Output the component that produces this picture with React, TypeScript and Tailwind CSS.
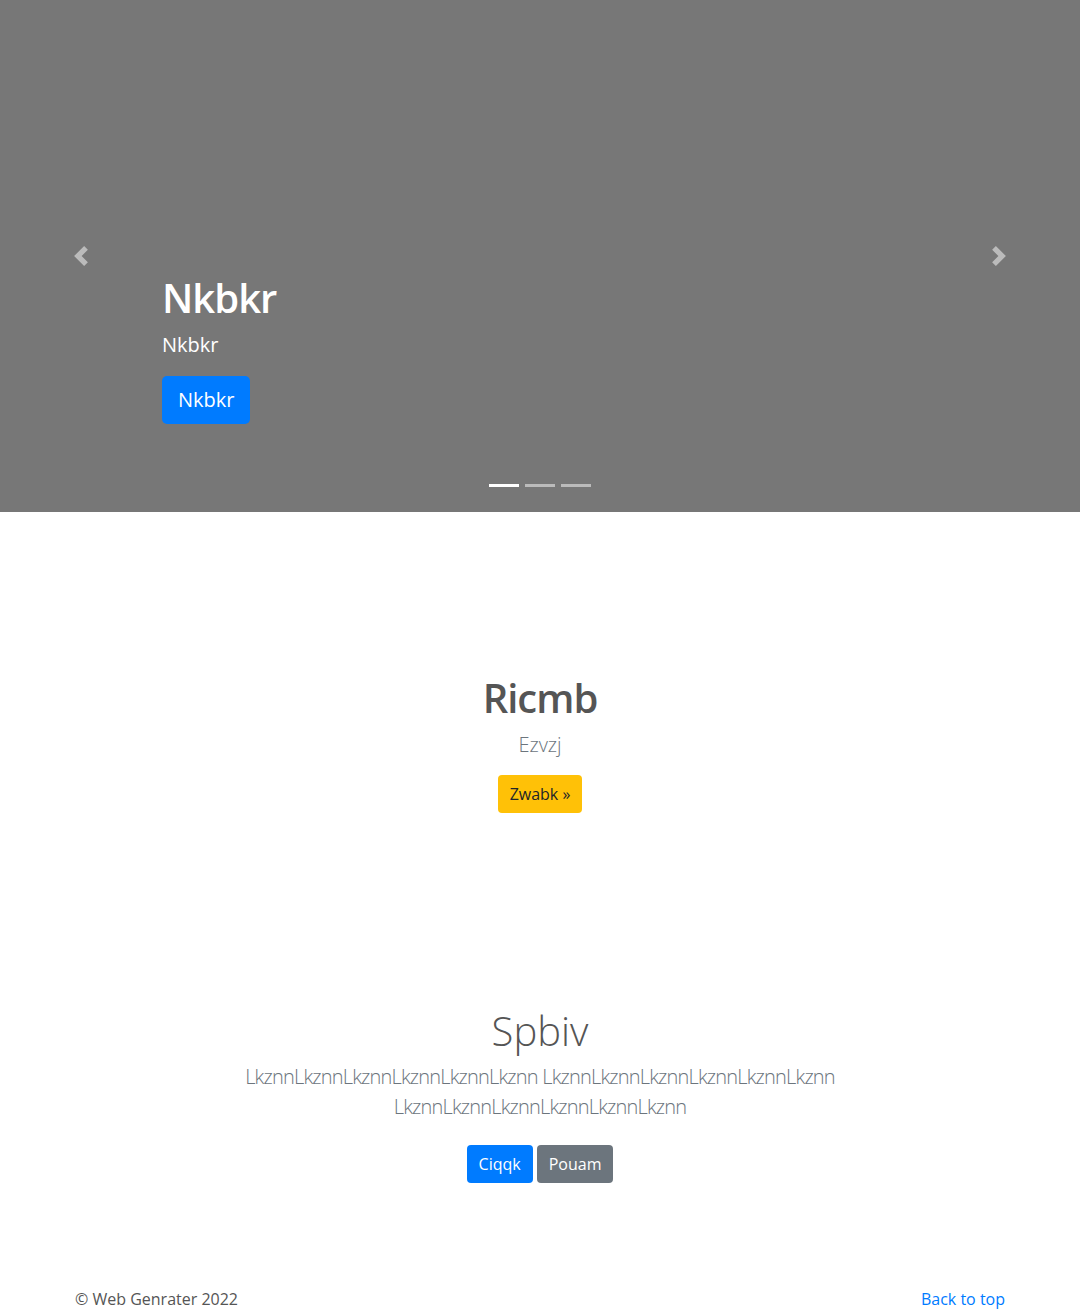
const font = { fontFamily: '"Open Sans", "Noto Sans", sans-serif' };

function ChevronLeft() {
  return (
    <svg viewBox="0 0 8 8" className="h-5 w-5 fill-white opacity-50">
      <path d="M5.25 0l-4 4 4 4 1.5-1.5L4.25 4l2.5-2.5L5.25 0z" />
    </svg>
  );
}

function ChevronRight() {
  return (
    <svg viewBox="0 0 8 8" className="h-5 w-5 fill-white opacity-50">
      <path d="M2.75 0l-1.5 1.5L3.75 4l-2.5 2.5L2.75 8l4-4-4-4z" />
    </svg>
  );
}

export default function App() {
  return (
    <div className="min-h-[1310px] bg-white text-[#212529]" style={font}>
      <section className="relative flex h-[512px] bg-[#777777]">
        <div className="flex w-[162px] items-center justify-center">
          <ChevronLeft />
        </div>
        <div className="flex flex-1 flex-col justify-end pb-[88px]">
          <h1 className="mb-2 text-[40px] font-semibold leading-[1.2] tracking-[-1px] text-white">Nkbkr</h1>
          <p className="mb-4 text-[20px] leading-[1.5] text-white">Nkbkr</p>
          <div>
            <button className="h-12 rounded-[5px] bg-[#007bff] px-4 text-[20px] leading-[1.6] text-white">
              Nkbkr
            </button>
          </div>
        </div>
        <div className="flex w-[162px] items-center justify-center">
          <ChevronRight />
        </div>
        <div className="absolute bottom-[25px] left-0 right-0 flex justify-center gap-[6px]">
          <span className="h-[3px] w-[30px] bg-white" />
          <span className="h-[3px] w-[30px] bg-white/50" />
          <span className="h-[3px] w-[30px] bg-white/50" />
        </div>
      </section>

      <section className="flex flex-col items-center pt-[162px] text-center">
        <h2 className="mb-2 text-[40px] font-semibold leading-[1.2] tracking-[-1px] text-[#555555]">Ricmb</h2>
        <p className="mb-[15px] text-[20px] font-light leading-[1.5] text-[#6c757d]">Ezvzj</p>
        <button className="h-[38px] rounded bg-[#ffc107] px-3 text-[16px] leading-[1.5] text-[#212529]">
          Zwabk »
        </button>
      </section>

      <section className="flex flex-col items-center pt-[194px] text-center">
        <h2 className="mb-[7px] text-[40px] font-light leading-[1.2] text-[#555555]">Spbiv</h2>
        <p className="mb-[23px] w-[640px] text-[20px] font-light leading-[1.5] tracking-[-0.8px] text-[#6c757d]">
          LkznnLkznnLkznnLkznnLkznnLkznn LkznnLkznnLkznnLkznnLkznnLkznn LkznnLkznnLkznnLkznnLkznnLkznn
        </p>
        <div className="flex gap-1">
          <button className="h-[38px] rounded bg-[#007bff] px-3 text-[16px] leading-[1.5] text-white">Ciqqk</button>
          <button className="h-[38px] rounded bg-[#6c757d] px-3 text-[16px] leading-[1.5] text-white">Pouam</button>
        </div>
      </section>

      <footer className="mx-auto mt-[104px] flex w-[960px] justify-between px-[15px] text-[16px] leading-[1.5]">
        <p className="text-[#555555]">© Web Genrater 2022</p>
        <a href="#" className="text-[#007bff]">Back to top</a>
      </footer>
    </div>
  );
}
